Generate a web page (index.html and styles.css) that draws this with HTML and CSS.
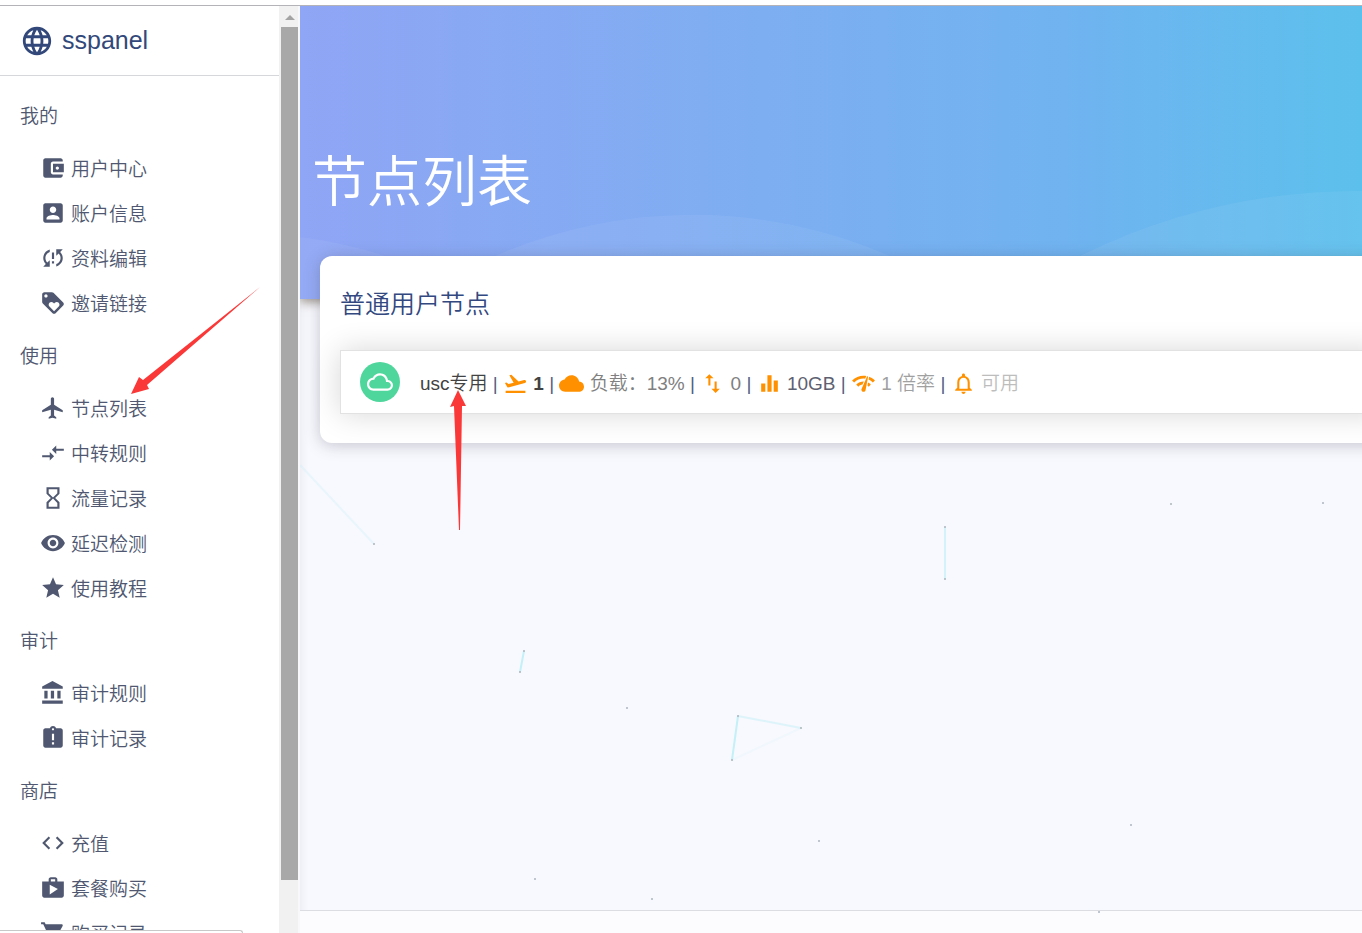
FILE: index.html
```html
<!DOCTYPE html>
<html lang="zh-CN">
<head>
    <meta charset="UTF-8">
    <meta name="viewport" content="width=device-width, initial-scale=1.0">
    <title>节点列表 - sspanel</title>
    <link rel="stylesheet" href="styles.css">
</head>
<body>
    <div class="topline"></div>

    <div class="app">
        <aside class="sidebar">
            <a class="brand" href="#">
                <svg class="brand-icon" viewBox="0 0 24 24"><path d="M11.99 2C6.47 2 2 6.48 2 12s4.47 10 9.99 10C17.52 22 22 17.52 22 12S17.52 2 11.99 2zm6.93 6h-2.95c-.32-1.25-.78-2.45-1.38-3.56 1.84.63 3.37 1.91 4.33 3.56zM12 4.04c.83 1.2 1.48 2.53 1.91 3.96h-3.82c.43-1.43 1.08-2.76 1.91-3.96zM4.26 14C4.1 13.36 4 12.69 4 12s.1-1.36.26-2h3.38c-.08.66-.14 1.32-.14 2 0 .68.06 1.34.14 2H4.26zm.82 2h2.95c.32 1.25.78 2.45 1.38 3.56-1.84-.63-3.37-1.9-4.33-3.56zm2.95-8H5.08c.96-1.66 2.49-2.93 4.33-3.56C8.81 5.55 8.35 6.75 8.03 8zM12 19.96c-.83-1.2-1.48-2.53-1.91-3.96h3.82c-.43 1.43-1.08 2.76-1.91 3.96zM14.34 14H9.66c-.09-.66-.16-1.32-.16-2 0-.68.07-1.35.16-2h4.68c.09.65.16 1.32.16 2 0 .68-.07 1.34-.16 2zm.25 5.56c.6-1.11 1.06-2.31 1.38-3.56h2.95c-.96 1.65-2.49 2.93-4.33 3.56zM16.36 14c.08-.66.14-1.32.14-2 0-.68-.06-1.34-.14-2h3.38c.16.64.26 1.31.26 2s-.1 1.36-.26 2h-3.38z"/></svg>
                <span>sspanel</span>
            </a>

            <nav class="menu">
                <h2>我的</h2>
                <ul>
                    <li><a href="#"><svg class="icon" viewBox="0 0 24 24"><path d="M21 18v1c0 1.1-.9 2-2 2H5c-1.11 0-2-.9-2-2V5c0-1.1.89-2 2-2h14c1.1 0 2 .9 2 2v1h-9c-1.11 0-2 .9-2 2v8c0 1.1.89 2 2 2h9zm-9-2h10V8H12v8zm4-2.5c-.83 0-1.5-.67-1.5-1.5s.67-1.5 1.5-1.5 1.5.67 1.5 1.5-.67 1.5-1.5 1.5z"/></svg>用户中心</a></li>
                    <li><a href="#"><svg class="icon" viewBox="0 0 24 24"><path d="M3 5v14c0 1.1.89 2 2 2h14c1.1 0 2-.9 2-2V5c0-1.1-.9-2-2-2H5c-1.11 0-2 .9-2 2zm12 4c0 1.66-1.34 3-3 3s-3-1.34-3-3 1.34-3 3-3 3 1.34 3 3zm-9 8c0-2 4-3.1 6-3.1s6 1.1 6 3.1v1H6v-1z"/></svg>账户信息</a></li>
                    <li><a href="#"><svg class="icon" viewBox="0 0 24 24"><path d="M3 12c0 2.21.91 4.2 2.36 5.64L3 20h6v-6l-2.24 2.24C5.68 15.15 5 13.66 5 12c0-2.61 1.67-4.83 4-5.65V4.26C5.55 5.15 3 8.27 3 12zm8 5h2v-2h-2v2zM21 4h-6v6l2.24-2.24C18.32 8.85 19 10.34 19 12c0 2.61-1.67 4.83-4 5.65v2.09c3.45-.89 6-4.01 6-7.74 0-2.21-.91-4.2-2.36-5.64L21 4zm-10 9h2V7h-2v6z"/></svg>资料编辑</a></li>
                    <li><a href="#"><svg class="icon" viewBox="0 0 24 24"><path d="M21.41 11.58l-9-9C12.05 2.22 11.55 2 11 2H4c-1.1 0-2 .9-2 2v7c0 .55.22 1.05.59 1.42l9 9c.36.36.86.58 1.41.58.55 0 1.05-.22 1.41-.59l7-7c.37-.36.59-.86.59-1.41 0-.55-.23-1.06-.59-1.42zM5.5 7C4.67 7 4 6.33 4 5.5S4.67 4 5.5 4 7 4.67 7 5.5 6.33 7 5.5 7zm11.77 8.27L13 19.54l-4.27-4.27C8.28 14.81 8 14.19 8 13.5c0-1.38 1.12-2.5 2.5-2.5.69 0 1.32.28 1.77.74l.73.72.73-.73c.45-.45 1.08-.73 1.77-.73 1.38 0 2.5 1.12 2.5 2.5 0 .69-.28 1.32-.73 1.77z"/></svg>邀请链接</a></li>
                </ul>

                <h2>使用</h2>
                <ul>
                    <li><a href="#"><svg class="icon" viewBox="0 0 24 24"><path d="M21 16v-2l-8-5V3.5c0-.83-.67-1.5-1.5-1.5S10 2.67 10 3.5V9l-8 5v2l8-2.5V19l-2 1.5V22l3.5-1 3.5 1v-1.5L13 19v-5.5l8 2.5z"/></svg>节点列表</a></li>
                    <li><a href="#"><svg class="icon" viewBox="0 0 24 24"><path d="M9.01 14H2v2h7.01v3L13 15l-3.99-4v3zm5.98-1v-3H22V8h-7.01V5L11 9l3.99 4z"/></svg>中转规则</a></li>
                    <li><a href="#"><svg class="icon" viewBox="0 0 24 24"><path d="M6 2v6h.01L6 8.01 10 12l-4 4 .01.01H6V22h12v-5.99h-.01L18 16l-4-4 4-3.99-.01-.01H18V2H6zm10 14.5V20H8v-3.5l4-4 4 4zm-4-5l-4-4V4h8v3.5l-4 4z"/></svg>流量记录</a></li>
                    <li><a href="#"><svg class="icon" viewBox="0 0 24 24"><path d="M12 4.5C7 4.5 2.73 7.61 1 12c1.73 4.39 6 7.5 11 7.5s9.27-3.11 11-7.5c-1.73-4.39-6-7.5-11-7.5zM12 17c-2.76 0-5-2.24-5-5s2.24-5 5-5 5 2.24 5 5-2.24 5-5 5zm0-8c-1.66 0-3 1.34-3 3s1.34 3 3 3 3-1.34 3-3-1.34-3-3-3z"/></svg>延迟检测</a></li>
                    <li><a href="#"><svg class="icon" viewBox="0 0 24 24"><path d="M12 17.27L18.18 21l-1.64-7.03L22 9.24l-7.19-.61L12 2 9.19 8.63 2 9.24l5.46 4.73L5.82 21z"/></svg>使用教程</a></li>
                </ul>

                <h2>审计</h2>
                <ul>
                    <li><a href="#"><svg class="icon" viewBox="0 0 24 24"><path d="M4 10v7h3v-7H4zm6 0v7h3v-7h-3zM2 22h19v-3H2v3zm14-12v7h3v-7h-3zm-4.5-9L2 6v2h19V6l-9.5-5z"/></svg>审计规则</a></li>
                    <li><a href="#"><svg class="icon" viewBox="0 0 24 24"><path d="M19 3h-4.18C14.4 1.84 13.3 1 12 1c-1.3 0-2.4.84-2.82 2H5c-1.1 0-2 .9-2 2v14c0 1.1.9 2 2 2h14c1.1 0 2-.9 2-2V5c0-1.1-.9-2-2-2zm-6 15h-2v-2h2v2zm0-4h-2V8h2v6zm-1-9c-.55 0-1-.45-1-1s.45-1 1-1 1 .45 1 1-.45 1-1 1z"/></svg>审计记录</a></li>
                </ul>

                <h2>商店</h2>
                <ul>
                    <li><a href="#"><svg class="icon" viewBox="0 0 24 24"><path d="M9.4 16.6L4.8 12l4.6-4.6L8 6l-6 6 6 6 1.4-1.4zm5.2 0l4.6-4.6-4.6-4.6L16 6l6 6-6 6-1.4-1.4z"/></svg>充值</a></li>
                    <li><a href="#"><svg class="icon" viewBox="0 0 24 24"><path d="M16 6V4c0-1.11-.89-2-2-2h-4c-1.11 0-2 .89-2 2v2H2v13c0 1.11.89 2 2 2h16c1.11 0 2-.89 2-2V6h-6zm-6-2h4v2h-4V4zM9 18V9l7.5 4L9 18z"/></svg>套餐购买</a></li>
                    <li><a href="#"><svg class="icon" viewBox="0 0 24 24"><path d="M7 18c-1.1 0-1.99.9-1.99 2S5.9 22 7 22s2-.9 2-2-.9-2-2-2zM1 2v2h2l3.6 7.59-1.35 2.45c-.16.28-.25.61-.25.96 0 1.1.9 2 2 2h12v-2H7.42c-.14 0-.25-.11-.25-.25l.03-.12.9-1.63h7.45c.75 0 1.41-.41 1.75-1.03l3.58-6.49c.08-.14.12-.31.12-.48 0-.55-.45-1-1-1H5.21l-.94-2H1zm16 16c-1.1 0-1.99.9-1.99 2s.89 2 1.99 2 2-.9 2-2-.9-2-2-2z"/></svg>购买记录</a></li>
                </ul>
            </nav>
        </aside>

        <div class="scrollbar">
            <div class="scroll-up"></div>
            <div class="scroll-thumb"></div>
        </div>

        <main class="main">
            <svg class="particles" width="1062" height="927">
                <g class="links">
                    <path d="M0 459L74 538" opacity=".3"/>
                    <path d="M645 521V573" opacity=".7"/>
                    <path d="M224 645L220 666"/>
                    <path d="M438 710L432 754"/>
                    <path d="M438 710L501 722" opacity=".5"/>
                    <path d="M501 722L432 754" opacity=".15"/>
                </g>
                <g class="dots">
                    <circle cx="74" cy="538" r="1"/>
                    <circle cx="645" cy="521" r="1"/>
                    <circle cx="645" cy="573" r="1"/>
                    <circle cx="871" cy="498" r="1"/>
                    <circle cx="1023" cy="497" r="1"/>
                    <circle cx="224" cy="645" r="1"/>
                    <circle cx="220" cy="666" r="1"/>
                    <circle cx="327" cy="702" r="1"/>
                    <circle cx="438" cy="710" r="1"/>
                    <circle cx="501" cy="722" r="1"/>
                    <circle cx="432" cy="754" r="1"/>
                    <circle cx="831" cy="819" r="1"/>
                    <circle cx="519" cy="835" r="1"/>
                    <circle cx="235" cy="873" r="1"/>
                    <circle cx="352" cy="893" r="1"/>
                    <circle cx="799" cy="906" r="1"/>
                </g>
            </svg>

            <header class="hero">
                <svg class="waves" viewBox="0 0 1062 293" preserveAspectRatio="none">
                    <path d="M0 231Q42 236 85 250Q130 262 195 250A494 494 0 0 1 590 250Q690 275 780 250A627 627 0 0 1 1062 185V293H0z"/>
                </svg>
                <h1>节点列表</h1>
            </header>

            <section class="card">
                <h2>普通用户节点</h2>
                <div class="node">
                    <span class="node-status"><svg class="icon" viewBox="0 0 24 24"><path d="M19.35 10.04C18.67 6.59 15.64 4 12 4 9.11 4 6.6 5.64 5.35 8.04 2.34 8.36 0 10.91 0 14c0 3.31 2.69 6 6 6h13c2.76 0 5-2.24 5-5 0-2.64-2.05-4.78-4.65-4.96zM19 18H6c-2.21 0-4-1.79-4-4s1.79-4 4-4h.71C7.37 7.69 9.48 6 12 6c3.04 0 5.5 2.46 5.5 5.5v.5H19c1.66 0 3 1.34 3 3s-1.34 3-3 3z"/></svg></span>
                    <p class="node-info">
                        <a class="node-name" href="#">usc专用</a> |
                        <svg class="icon" viewBox="0 0 24 24"><path d="M2.5 19h19v2h-19zm19.57-9.36c-.21-.8-1.04-1.28-1.84-1.06L14.92 10l-6.9-6.43-1.93.51 4.14 7.17-4.97 1.33-1.97-1.54-1.45.39 1.82 3.16.77 1.33 1.6-.43 5.31-1.42 4.35-1.16L21 11.49c.81-.23 1.28-1.05 1.07-1.85z"/></svg>
                        <b>1</b> |
                        <svg class="icon" viewBox="0 0 24 24"><path d="M19.35 10.04C18.67 6.59 15.64 4 12 4 9.11 4 6.6 5.64 5.35 8.04 2.34 8.36 0 10.91 0 14c0 3.31 2.69 6 6 6h13c2.76 0 5-2.24 5-5 0-2.64-2.05-4.78-4.65-4.96z"/></svg>
                        <span class="load">负载：13%</span> |
                        <svg class="icon" viewBox="0 0 24 24"><path d="M16 17.01V10h-2v7.01h-3L15 21l4-3.99h-3zM9 3L5 6.99h3V14h2V6.99h3L9 3z"/></svg>
                        <span class="load">0</span> |
                        <svg class="icon" viewBox="0 0 24 24"><path d="M10 20h4V4h-4v16zm-6 0h4v-8H4v8zM16 9v11h4V9h-4z"/></svg>
                        <span class="traffic">10GB</span> |
                        <svg class="icon" viewBox="0 0 24 24"><path d="M15.9 5c-.17 0-.32.09-.41.23l-.07.15-5.18 11.65c-.16.29-.26.61-.26.96 0 1.11.9 2.01 2.01 2.01.96 0 1.77-.68 1.96-1.59l.01-.03L16.4 5.5c0-.28-.22-.5-.5-.5zM1 9l2 2c2.88-2.88 6.79-4.08 10.53-3.62l1.19-2.68C9.89 3.84 4.74 5.27 1 9zm20 2l2-2c-1.64-1.64-3.55-2.82-5.59-3.57l-.53 2.82c1.5.62 2.9 1.53 4.12 2.75zm-4 4l2-2c-.8-.8-1.7-1.42-2.66-1.89l-.55 2.92c.42.27.83.59 1.21.97zM5 13l2 2c1.13-1.13 2.56-1.79 4.03-2l1.28-2.88c-2.63-.08-5.3.87-7.31 2.88z"/></svg>
                        <span class="rate">1 倍率</span> |
                        <svg class="icon" viewBox="0 0 24 24"><path d="M12 22c1.1 0 2-.9 2-2h-4c0 1.1.9 2 2 2zm6-6v-5c0-3.07-1.63-5.64-4.5-6.32V4c0-.83-.67-1.5-1.5-1.5s-1.5.67-1.5 1.5v.68C7.64 5.36 6 7.92 6 11v5l-2 2v1h16v-1l-2-2zm-2 1H8v-6c0-2.48 1.51-4.5 4-4.5s4 2.02 4 4.5v6z"/></svg>
                        <span class="state">可用</span>
                    </p>
                </div>
            </section>

            <footer class="footer"></footer>
        </main>
    </div>

    <div class="statusbar"></div>

    <!-- hint arrows drawn over the page -->
    <svg class="arrows" width="480" height="540">
        <path d="M260 287L147 385L149 389L131 394L139 377L143 380z"/>
        <path d="M459 530L454 406L450 407L458 390L466 406L462 406L460 530z"/>
    </svg>
</body>
</html>
```
FILE: styles.css
```css
* {
    box-sizing: border-box;
}
body {
    display: flex;
    flex-direction: column;
    height: 100vh;
    margin: 0;
    overflow: hidden;
    background-color: #fff;
    color: #525f7f;
    font-family: "Liberation Sans", "Noto Sans CJK SC", sans-serif;
    font-size: 19px;
    font-weight: 350;
}
h1, h2, p, ul {
    margin: 0;
    padding: 0;
    font-weight: 350;
}
a {
    color: inherit;
    text-decoration: none;
}
.icon {
    width: 26px;
    height: 26px;
    flex: none;
    fill: currentColor;
}
.topline {
    flex: none;
    height: 6px;
    border-bottom: 1px solid #b4b4b8;
}
.app {
    display: flex;
    flex: 1;
    min-height: 0;
}

/* sidebar */
.sidebar {
    flex: none;
    width: 279px;
    overflow: hidden;
    color: #4f5870;
}
.brand {
    display: flex;
    align-items: center;
    gap: 8px;
    height: 70px;
    padding-left: 20px;
    border-bottom: 1px solid #d6d7da;
    color: #32487a;
    font-size: 25px;
}
.brand-icon {
    width: 34px;
    height: 34px;
    fill: currentColor;
}
.menu {
    padding-top: 9px;
}
.menu h2 {
    height: 60px;
    padding-left: 20px;
    font-size: 19px;
    line-height: 64px;
}
.menu ul {
    list-style: none;
}
.menu li a {
    display: flex;
    align-items: center;
    gap: 5px;
    height: 45px;
    padding-left: 40px;
}
.scrollbar {
    display: flex;
    flex-direction: column;
    align-items: center;
    flex: none;
    width: 21px;
    padding: 9px 0 53px 2px;
    border-right: 2px solid #f8f8fa;
    background-color: #f1f1f1;
}
.scroll-up {
    border: 5px solid transparent;
    border-top: 0;
    border-bottom-color: #a3a3a3;
}
.scroll-thumb {
    flex: 1;
    width: 17px;
    margin-top: 7px;
    background-color: #a8a8a8;
}

/* content */
.main {
    position: relative;
    display: flex;
    flex-direction: column;
    flex: 1;
    min-width: 0;
    overflow: hidden;
    background-color: #f8f9fe;
    box-shadow: inset 6px 0 8px -4px rgba(0, 0, 0, 0.06);
}
.particles {
    position: absolute;
    top: 0;
    left: 0;
    z-index: 1;
}
.links {
    fill: none;
    stroke: #c4f0f8;
    stroke-width: 2;
}
.dots {
    fill: #adb5bd;
}
.hero {
    position: relative;
    z-index: 2;
    height: 293px;
    padding: 136px 12px 0;
    background: linear-gradient(to right, #8fa5f5, #80adf2 38%, #70b3f0 72%, #5cc0ec);
    box-shadow: 0 3px 10px rgba(60, 40, 20, 0.5);
    color: #fff;
}
.waves {
    position: absolute;
    top: 0;
    left: 0;
    width: 100%;
    height: 100%;
    fill: rgba(255, 255, 255, 0.06);
}
.hero h1 {
    position: relative;
    font-size: 55px;
    line-height: 80px;
}
.card {
    position: relative;
    z-index: 3;
    margin: -43px -40px 0 20px;
    padding: 28px 20px 29px;
    border-radius: 12px;
    background-color: #fff;
    box-shadow: 0 2px 16px rgba(50, 50, 70, 0.26);
}
.card h2 {
    color: #32487f;
    font-size: 25px;
    line-height: 40px;
}
.node {
    display: flex;
    align-items: center;
    gap: 20px;
    height: 64px;
    margin-top: 26px;
    padding-left: 19px;
    border: 1px solid #e2e2e2;
    box-shadow: 0 0 30px rgba(0, 0, 0, 0.16);
}
.node-status {
    display: flex;
    align-items: center;
    justify-content: center;
    width: 40px;
    height: 40px;
    border-radius: 50%;
    background-color: #4fd69c;
    color: #fff;
}
.node-info {
    white-space: nowrap;
}
.node-info .icon {
    width: 25px;
    height: 25px;
    margin-top: -4px;
    vertical-align: middle;
    fill: #ff9100;
}
.node-name,
.node-info b {
    color: #424242;
}
.load {
    color: #808080;
}
.traffic {
    color: #5c6070;
}
.rate {
    color: #a0a0a0;
}
.state {
    color: #bdbdbd;
}
.footer {
    height: 23px;
    margin-top: auto;
    border-top: 1px solid #dcdde2;
    background-color: #fcfcfe;
}

/* things lying over the page */
.statusbar {
    position: absolute;
    bottom: 0;
    left: 0;
    width: 243px;
    height: 3px;
    border-top: 1px solid #c8c8c8;
    border-right: 1px solid #c8c8c8;
    border-top-right-radius: 3px;
    background-color: #fff;
}
.arrows {
    position: absolute;
    top: 0;
    left: 0;
    z-index: 5;
    fill: #fb3838;
    pointer-events: none;
}
```
